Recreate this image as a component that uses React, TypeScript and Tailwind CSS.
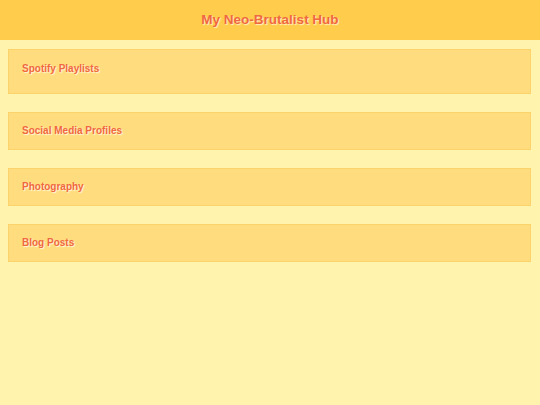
import React from "react";

const sections = ["Spotify Playlists", "Social Media Profiles", "Photography", "Blog Posts"];

export default function App() {
  return (
    <div className="min-h-[405px] w-full bg-[#fff3ae]" style={{ fontFamily: '"Liberation Sans", Arial, sans-serif' }}>
      <header className="h-[40px] bg-[#ffcc4b] flex items-center justify-center">
        <h1 className="text-[13.5px] font-bold text-[#f0683f] [text-shadow:1px_1px_1px_#fff0c0]">My Neo-Brutalist Hub</h1>
      </header>
      <main className="pl-[8px] pr-[9px] pt-[9px] flex flex-col gap-[18px]">
        {sections.map((s, i) => (
          <section
            key={s}
            className={`bg-[#ffdd7e] border border-[#fcd36a] pl-[13px] ${i === 0 ? "h-[45px] pt-[13px]" : "h-[38px] pt-[12px]"}`}
          >
            <h2 className="text-[10px] leading-[12px] font-bold text-[#f0683f] [text-shadow:1px_1px_1px_#fff6dc]">{s}</h2>
          </section>
        ))}
      </main>
    </div>
  );
}
